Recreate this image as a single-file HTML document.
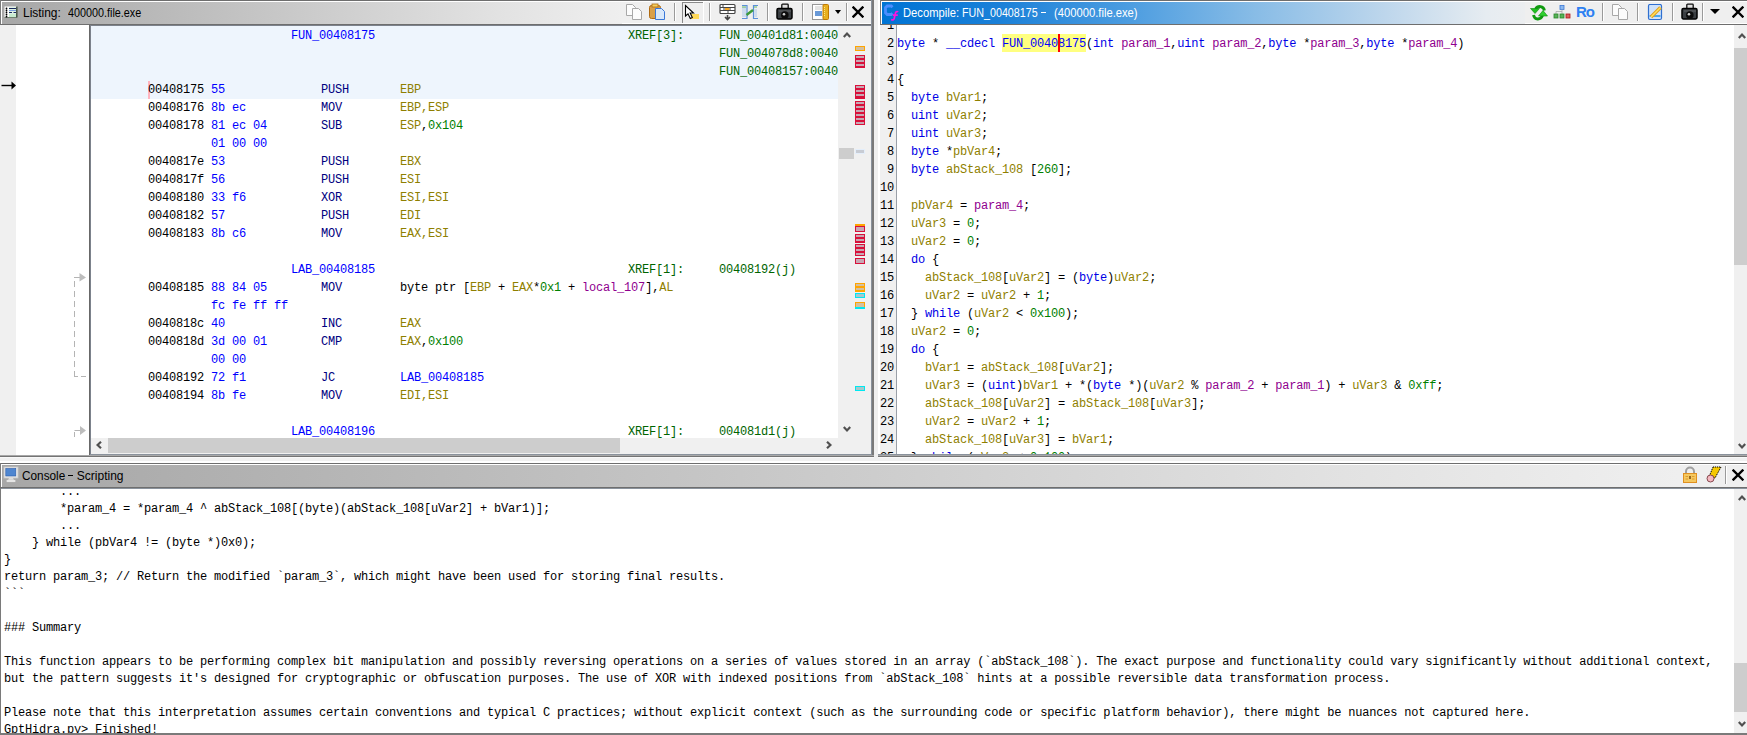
<!DOCTYPE html>
<html><head><meta charset="utf-8">
<style>
*{box-sizing:border-box}
html,body{margin:0;padding:0}
body{width:1747px;height:735px;overflow:hidden;position:relative;background:#f0f0f0;font-family:"Liberation Sans",sans-serif}
.a{position:absolute;display:block}
.m{font-family:"Liberation Mono",monospace;font-size:12px;letter-spacing:-0.2px;white-space:pre;line-height:18px;position:absolute;color:#000}
.ttl{font-family:"Liberation Sans",sans-serif;font-size:12px;white-space:pre;position:absolute;line-height:18px}
.k{color:#0000e6}.f{color:#0000ff}.v{color:#8f7f00}.p{color:#8f008f}.c{color:#008000}
.ad{color:#000}.by{color:#0000ff}.mn{color:#000080}.rg{color:#8f7f00}.lb{color:#0000ff}.xr{color:#006400}
</style></head>
<body>
<div class="a" style="left:0px;top:0px;width:874px;height:1px;background:#6e6e6e;"></div>
<div class="a" style="left:0px;top:0px;width:1px;height:25px;background:#7a7a7a;"></div>
<div class="a" style="left:1px;top:1px;width:870px;height:1px;background:#ffffff;"></div>
<div class="a" style="left:1px;top:1px;width:1px;height:23px;background:#ffffff;"></div>
<div class="a" style="left:2px;top:2px;width:620px;height:22px;background:linear-gradient(to right,#a7a7a7 0%,#c4c4c4 40%,#e2e2e2 80%,#efefef 100%);"></div>
<div class="a" style="left:622px;top:2px;width:249px;height:21px;background:#efefef;"></div>
<div class="a" style="left:622px;top:23px;width:249px;height:1px;background:#ffffff;"></div>
<div class="a" style="left:0px;top:24px;width:874px;height:1px;background:#6e6e6e;"></div>
<svg class="a" style="left:4px;top:6px" width="14" height="13" viewBox="0 0 14 13"><rect x="0.5" y="0.5" width="12.5" height="11" fill="#ffffff"/><rect x="5" y="1" width="7.5" height="10.5" fill="#dff2e4"/><path d="M5 2.5H12M5 6.5H8M9.5 6.5H12" stroke="#1a2a60" stroke-width="1.2"/><path d="M5 4.5H12" stroke="#7aa0e0" stroke-width="1"/><rect x="5" y="8" width="7.5" height="3.5" fill="#c8ecd0"/><path d="M12.8 0.5V11.5" stroke="#223322" stroke-width="1.2"/><path d="M0.5 11.5H13" stroke="#556655" stroke-width="0.8"/><circle cx="2.5" cy="2.5" r="0.9" fill="#000"/><circle cx="2.5" cy="4.5" r="0.9" fill="#000"/><circle cx="2.5" cy="6.4" r="0.9" fill="#000"/><circle cx="2.5" cy="8.4" r="0.9" fill="#000"/><circle cx="2.5" cy="10.5" r="0.9" fill="#000"/></svg>
<div class="ttl" style="left:22.6px;top:4px;color:#000;transform:scaleX(0.995);transform-origin:0 0">Listing:</div>
<div class="ttl" style="left:67.8px;top:4px;color:#000;transform:scaleX(0.9);transform-origin:0 0">400000.file.exe</div>
<svg class="a" style="left:626px;top:4px" width="17" height="17" viewBox="0 0 17 17"><path d="M0.5 0.5H6.5L9.5 3.5V11.5H0.5Z" fill="#fcfcfc" stroke="#a8a8a8"/><path d="M6.5 4.5H12.5L15.5 7.5V15.5H6.5Z" fill="#fcfcfc" stroke="#a8a8a8"/></svg>
<svg class="a" style="left:648px;top:3px" width="18" height="18" viewBox="0 0 18 18"><rect x="1.5" y="2.5" width="11" height="13" rx="2" fill="#d9a04a" stroke="#b06a10"/><rect x="4" y="1" width="6" height="3" fill="#f5d060" stroke="#b06a10" stroke-width="0.8"/><path d="M7.5 5.5H13.5L16.5 8.5V16.5H7.5Z" fill="#d8e8fb" stroke="#3a78d8"/></svg>
<div class="a" style="left:674px;top:3px;width:1px;height:18px;background:#9a9a9a;"></div><div class="a" style="left:675px;top:3px;width:1px;height:18px;background:#ffffff;"></div>
<div class="a" style="left:682px;top:2px;width:22px;height:1px;background:#8a8a8a;"></div>
<div class="a" style="left:682px;top:2px;width:1px;height:21px;background:#8a8a8a;"></div>
<div class="a" style="left:703px;top:2px;width:1px;height:22px;background:#ffffff;"></div>
<div class="a" style="left:682px;top:23px;width:22px;height:1px;background:#ffffff;"></div>
<svg class="a" style="left:684px;top:4px" width="17" height="17" viewBox="0 0 17 17"><rect x="6" y="10" width="9" height="5" fill="#ffd95a"/><path d="M1.5 1.5V12L4 9.8L6.3 14.5L8.3 13.6L6.2 9H9.5Z" fill="#fff" stroke="#000" stroke-width="1.1" stroke-linejoin="miter"/></svg>
<div class="a" style="left:709px;top:3px;width:1px;height:18px;background:#9a9a9a;"></div><div class="a" style="left:710px;top:3px;width:1px;height:18px;background:#ffffff;"></div>
<svg class="a" style="left:719px;top:3px" width="17" height="18" viewBox="0 0 17 18"><rect x="1" y="1.5" width="15" height="9" rx="1" fill="#fff" stroke="#444" stroke-width="1.2"/><path d="M1 4.5H16M1 7.5H16M4 1.5V4.5M11 4.5V7.5M9 7.5V10.5M5 4.5V7.5" stroke="#444" stroke-width="1"/><rect x="6" y="5" width="4.5" height="2" fill="#f5a623"/><path d="M8.5 12V16M6 14L8.5 16.5L11 14" stroke="#444" stroke-width="1.6" fill="none"/></svg>
<svg class="a" style="left:741px;top:4px" width="18" height="16" viewBox="0 0 18 16"><path d="M1 1.5H6V14.5H1" fill="none" stroke="#5b8fd8" stroke-width="1.2"/><path d="M17 1.5H12.5V14.5H17" fill="none" stroke="#5b8fd8" stroke-width="1.2"/><path d="M1 4H5M1 6H5M1 8H5M1 10H5M1 12H5" stroke="#9dbfea" stroke-width="0.8"/><path d="M13.5 6H16M13.5 8H16M13.5 10H16M13.5 12H16" stroke="#9dbfea" stroke-width="0.8"/><path d="M1 3H5M13 3H16" stroke="#66bb66" stroke-width="1"/><path d="M5.5 11L12 6" stroke="#3c9a3c" stroke-width="2.4"/></svg>
<div class="a" style="left:767px;top:3px;width:1px;height:18px;background:#9a9a9a;"></div><div class="a" style="left:768px;top:3px;width:1px;height:18px;background:#ffffff;"></div>
<svg class="a" style="left:776px;top:3px" width="17" height="18" viewBox="0 0 17 18"><rect x="5.8" y="1.2" width="6.4" height="5" rx="0.8" fill="#e0e0e0" stroke="#111" stroke-width="1.3"/><rect x="1" y="5.5" width="15" height="10.5" rx="1.4" fill="#3a3e42" stroke="#000" stroke-width="1.5"/><path d="M3 8H15" stroke="#777" stroke-width="0.7"/><circle cx="8.8" cy="12" r="3.8" fill="#0c0c0c"/><circle cx="8" cy="11.2" r="1.3" fill="#d0d0d0"/></svg>
<div class="a" style="left:802px;top:3px;width:1px;height:18px;background:#9a9a9a;"></div><div class="a" style="left:803px;top:3px;width:1px;height:18px;background:#ffffff;"></div>
<svg class="a" style="left:812px;top:4px" width="17" height="16" viewBox="0 0 17 16"><rect x="0.5" y="0.5" width="11" height="15" fill="#fff" stroke="#222" stroke-width="0.9" stroke-dasharray="1 1"/><path d="M3 3H10M3 5H10" stroke="#bbb" stroke-width="0.8"/><rect x="3" y="7" width="7" height="5" fill="#6a9ad8"/><rect x="11" y="0.5" width="5.5" height="15" rx="1" fill="#e8b020" stroke="#c07800"/><path d="M12.5 3V13" stroke="#fff3a0" stroke-width="0.8" stroke-dasharray="1 1"/></svg>
<svg class="a" style="left:835px;top:10px" width="6" height="4" viewBox="0 0 6 4"><path d="M0 0H6L3.0 4Z" fill="#000"/></svg>
<div class="a" style="left:846px;top:3px;width:1px;height:18px;background:#9a9a9a;"></div><div class="a" style="left:847px;top:3px;width:1px;height:18px;background:#ffffff;"></div>
<svg class="a" style="left:852px;top:6px" width="12" height="12" viewBox="0 0 12 12"><path d="M1.5 1.5L10.5 10.5M10.5 1.5L1.5 10.5" stroke="#000" stroke-width="2.4" stroke-linecap="square"/></svg>
<div class="a" style="left:0px;top:25px;width:16px;height:430px;background:#f0f0f0;"></div>
<div class="a" style="left:16px;top:25px;width:73px;height:430px;background:#ffffff;"></div>
<div class="a" style="left:89px;top:25px;width:1px;height:430px;background:#686868;"></div>
<div class="a" style="left:90px;top:25px;width:1px;height:430px;background:#7c828c;"></div>
<div class="a" style="left:90px;top:25px;width:781px;height:1px;background:#7c828c;"></div>
<div class="a" style="left:91px;top:25px;width:747px;height:413px;background:#fff;overflow:hidden">
<div class="a" style="left:0px;top:1px;width:747px;height:73px;background:#eef5fd;"></div>
<div class="a" style="left:57px;top:56px;width:2px;height:18px;background:#ffb4c0;"></div>
<div class="m" style="left:200px;top:2px"><span class="lb">FUN_00408175</span></div>
<div class="m" style="left:537px;top:2px"><span class="xr">XREF[3]:</span></div>
<div class="m" style="left:628px;top:2px"><span class="xr">FUN_00401d81:0040</span></div>
<div class="m" style="left:628px;top:20px"><span class="xr">FUN_004078d8:0040</span></div>
<div class="m" style="left:628px;top:38px"><span class="xr">FUN_00408157:0040</span></div>
<div class="m" style="left:57px;top:56px"><span class="ad">00408175</span></div>
<div class="m" style="left:120px;top:56px"><span class="by">55</span></div>
<div class="m" style="left:230px;top:56px"><span class="mn">PUSH</span></div>
<div class="m" style="left:309px;top:56px"><span class="rg">EBP</span></div>
<div class="m" style="left:57px;top:74px"><span class="ad">00408176</span></div>
<div class="m" style="left:120px;top:74px"><span class="by">8b ec</span></div>
<div class="m" style="left:230px;top:74px"><span class="mn">MOV</span></div>
<div class="m" style="left:309px;top:74px"><span class="rg">EBP,ESP</span></div>
<div class="m" style="left:57px;top:92px"><span class="ad">00408178</span></div>
<div class="m" style="left:120px;top:92px"><span class="by">81 ec 04</span></div>
<div class="m" style="left:230px;top:92px"><span class="mn">SUB</span></div>
<div class="m" style="left:309px;top:92px"><span class="rg">ESP</span>,<span class="c">0x104</span></div>
<div class="m" style="left:120px;top:110px"><span class="by">01 00 00</span></div>
<div class="m" style="left:57px;top:128px"><span class="ad">0040817e</span></div>
<div class="m" style="left:120px;top:128px"><span class="by">53</span></div>
<div class="m" style="left:230px;top:128px"><span class="mn">PUSH</span></div>
<div class="m" style="left:309px;top:128px"><span class="rg">EBX</span></div>
<div class="m" style="left:57px;top:146px"><span class="ad">0040817f</span></div>
<div class="m" style="left:120px;top:146px"><span class="by">56</span></div>
<div class="m" style="left:230px;top:146px"><span class="mn">PUSH</span></div>
<div class="m" style="left:309px;top:146px"><span class="rg">ESI</span></div>
<div class="m" style="left:57px;top:164px"><span class="ad">00408180</span></div>
<div class="m" style="left:120px;top:164px"><span class="by">33 f6</span></div>
<div class="m" style="left:230px;top:164px"><span class="mn">XOR</span></div>
<div class="m" style="left:309px;top:164px"><span class="rg">ESI,ESI</span></div>
<div class="m" style="left:57px;top:182px"><span class="ad">00408182</span></div>
<div class="m" style="left:120px;top:182px"><span class="by">57</span></div>
<div class="m" style="left:230px;top:182px"><span class="mn">PUSH</span></div>
<div class="m" style="left:309px;top:182px"><span class="rg">EDI</span></div>
<div class="m" style="left:57px;top:200px"><span class="ad">00408183</span></div>
<div class="m" style="left:120px;top:200px"><span class="by">8b c6</span></div>
<div class="m" style="left:230px;top:200px"><span class="mn">MOV</span></div>
<div class="m" style="left:309px;top:200px"><span class="rg">EAX,ESI</span></div>
<div class="m" style="left:200px;top:236px"><span class="lb">LAB_00408185</span></div>
<div class="m" style="left:537px;top:236px"><span class="xr">XREF[1]:</span></div>
<div class="m" style="left:628px;top:236px"><span class="xr">00408192(j)</span></div>
<div class="m" style="left:57px;top:254px"><span class="ad">00408185</span></div>
<div class="m" style="left:120px;top:254px"><span class="by">88 84 05</span></div>
<div class="m" style="left:230px;top:254px"><span class="mn">MOV</span></div>
<div class="m" style="left:309px;top:254px">byte ptr [<span class="rg">EBP</span> + <span class="rg">EAX</span>*<span class="c">0x1</span> + <span class="p">local_107</span>],<span class="rg">AL</span></div>
<div class="m" style="left:120px;top:272px"><span class="by">fc fe ff ff</span></div>
<div class="m" style="left:57px;top:290px"><span class="ad">0040818c</span></div>
<div class="m" style="left:120px;top:290px"><span class="by">40</span></div>
<div class="m" style="left:230px;top:290px"><span class="mn">INC</span></div>
<div class="m" style="left:309px;top:290px"><span class="rg">EAX</span></div>
<div class="m" style="left:57px;top:308px"><span class="ad">0040818d</span></div>
<div class="m" style="left:120px;top:308px"><span class="by">3d 00 01</span></div>
<div class="m" style="left:230px;top:308px"><span class="mn">CMP</span></div>
<div class="m" style="left:309px;top:308px"><span class="rg">EAX</span>,<span class="c">0x100</span></div>
<div class="m" style="left:120px;top:326px"><span class="by">00 00</span></div>
<div class="m" style="left:57px;top:344px"><span class="ad">00408192</span></div>
<div class="m" style="left:120px;top:344px"><span class="by">72 f1</span></div>
<div class="m" style="left:230px;top:344px"><span class="mn">JC</span></div>
<div class="m" style="left:309px;top:344px"><span class="lb">LAB_00408185</span></div>
<div class="m" style="left:57px;top:362px"><span class="ad">00408194</span></div>
<div class="m" style="left:120px;top:362px"><span class="by">8b fe</span></div>
<div class="m" style="left:230px;top:362px"><span class="mn">MOV</span></div>
<div class="m" style="left:309px;top:362px"><span class="rg">EDI,ESI</span></div>
<div class="m" style="left:200px;top:398px"><span class="lb">LAB_00408196</span></div>
<div class="m" style="left:537px;top:398px"><span class="xr">XREF[1]:</span></div>
<div class="m" style="left:628px;top:398px"><span class="xr">004081d1(j)</span></div>
</div>
<div class="a" style="left:90px;top:25px;width:781px;height:1px;background:#7c828c;"></div>
<div class="a" style="left:838px;top:26px;width:33px;height:429px;background:#f0f0f0;"></div>
<svg class="a" style="left:843px;top:31px" width="8" height="7" viewBox="0 0 8 7"><path d="M0.8 6L4 2.6L7.2 6" stroke="#505050" stroke-width="2.2" fill="none"/></svg>
<svg class="a" style="left:843px;top:426px" width="8" height="7" viewBox="0 0 8 7"><path d="M0.8 1L4 4.4L7.2 1" stroke="#505050" stroke-width="2.2" fill="none"/></svg>
<div class="a" style="left:839px;top:148px;width:15px;height:11px;background:#cdcdcd;"></div>
<div class="a" style="left:855px;top:149px;width:10px;height:5px;background:#c8ccd4;box-shadow:0 0 0 1px #e4eefa inset"></div>
<div class="a" style="left:855px;top:46px;width:10px;height:5px;background:#d4c0a0;border:1px solid #ffa500"></div>
<div class="a" style="left:855px;top:55px;width:10px;height:13px;background:repeating-linear-gradient(to bottom,#c8a8b4 0,#c8a8b4 2px,#d8103a 2px,#d8103a 4px);border:1px solid #d8103a"></div>
<div class="a" style="left:855px;top:85px;width:10px;height:14px;background:repeating-linear-gradient(to bottom,#c8a8b4 0,#c8a8b4 2px,#d8103a 2px,#d8103a 4px);border:1px solid #d8103a"></div>
<div class="a" style="left:855px;top:101px;width:10px;height:24px;background:repeating-linear-gradient(to bottom,#c8a8b4 0,#c8a8b4 2px,#d8103a 2px,#d8103a 4px);border:1px solid #d8103a"></div>
<div class="a" style="left:855px;top:224px;width:10px;height:2px;background:#ffa500;"></div>
<div class="a" style="left:855px;top:226px;width:10px;height:6px;background:#c8a8b4;border:1px solid #d8103a"></div>
<div class="a" style="left:855px;top:234px;width:10px;height:9px;background:repeating-linear-gradient(to bottom,#c8a8b4 0,#c8a8b4 2px,#d8103a 2px,#d8103a 4px);border:1px solid #d8103a"></div>
<div class="a" style="left:855px;top:244px;width:10px;height:12px;background:repeating-linear-gradient(to bottom,#c8a8b4 0,#c8a8b4 2px,#d8103a 2px,#d8103a 4px);border:1px solid #d8103a"></div>
<div class="a" style="left:855px;top:258px;width:10px;height:6px;background:#c8a8b4;border:1px solid #d8103a"></div>
<div class="a" style="left:855px;top:283px;width:10px;height:9px;background:repeating-linear-gradient(to bottom,#d4c0a0 0,#d4c0a0 2px,#ffa500 2px,#ffa500 4px);border:1px solid #ffa500"></div>
<div class="a" style="left:855px;top:293px;width:10px;height:5px;background:#a8c8cc;border:1px solid #00e8f0"></div>
<div class="a" style="left:855px;top:302px;width:10px;height:6px;background:#d4c0a0;border:1px solid #ffa500"></div>
<div class="a" style="left:855px;top:307px;width:10px;height:2px;background:#00e8f0;"></div>
<div class="a" style="left:855px;top:386px;width:10px;height:5px;background:#a8c8cc;border:1px solid #00e8f0"></div>
<div class="a" style="left:871px;top:0px;width:1px;height:456px;background:#8a929c;"></div>
<div class="a" style="left:872px;top:0px;width:2px;height:456px;background:#7a7a7a;"></div>
<div class="a" style="left:91px;top:438px;width:747px;height:16px;background:#f0f0f0;"></div>
<div class="a" style="left:108px;top:438px;width:512px;height:15px;background:#cdcdcd;"></div>
<svg class="a" style="left:95px;top:441px" width="7" height="8" viewBox="0 0 7 8"><path d="M6 0.8L2.6 4L6 7.2" stroke="#505050" stroke-width="2.2" fill="none"/></svg>
<svg class="a" style="left:826px;top:441px" width="7" height="8" viewBox="0 0 7 8"><path d="M1 0.8L4.4 4L1 7.2" stroke="#505050" stroke-width="2.2" fill="none"/></svg>
<div class="a" style="left:90px;top:454px;width:781px;height:1px;background:#8a929c;"></div>
<div class="a" style="left:0px;top:455px;width:874px;height:1px;background:#a8a8a8;"></div>
<div class="a" style="left:0px;top:456px;width:874px;height:1px;background:#747474;"></div>
<div class="a" style="left:0px;top:457px;width:874px;height:1px;background:#f8f8f8;"></div>
<svg class="a" style="left:0px;top:80px" width="17" height="11" viewBox="0 0 17 11"><path d="M1.5 5.5H13" stroke="#000" stroke-width="1.4"/><path d="M11.5 1.5L16 5.5L11.5 9.5Z" fill="#000"/></svg>
<svg class="a" style="left:70px;top:268px" width="18" height="114" viewBox="0 0 18 114"><path d="M4.5 13V109" stroke="#b4b4b4" stroke-width="1" fill="none" stroke-dasharray="6 4"/><path d="M4 108.5H8M11 108.5H16" stroke="#b4b4b4" stroke-width="1"/><path d="M4 9.5H10" stroke="#b4b4b4" stroke-width="1"/><path d="M9.5 5L16 9.5L9.5 13.5Z" fill="#bdbdbd"/></svg>
<svg class="a" style="left:70px;top:422px" width="18" height="18" viewBox="0 0 18 18"><path d="M4.5 8.5H11" stroke="#b4b4b4" stroke-width="1"/><path d="M4.5 10V15" stroke="#b4b4b4" stroke-width="1"/><path d="M10 4L16 8.5L10 13Z" fill="#bdbdbd"/></svg>
<div class="a" style="left:880px;top:0px;width:867px;height:1px;background:#6e6e6e;"></div>
<div class="a" style="left:880px;top:0px;width:1px;height:25px;background:#7a7a7a;"></div>
<div class="a" style="left:878px;top:0px;width:2px;height:455px;background:#ffffff;"></div>
<div class="a" style="left:881px;top:1px;width:866px;height:1px;background:#ffffff;"></div>
<div class="a" style="left:881px;top:1px;width:1px;height:23px;background:#ffffff;"></div>
<div class="a" style="left:882px;top:2px;width:643px;height:22px;background:linear-gradient(to right,#0074d4 0%,#1a80d8 18%,#4b9ce0 38%,#88bce6 58%,#bdd6ec 78%,#e6ecf1 94%,#eceef0 100%);"></div>
<div class="a" style="left:1525px;top:2px;width:222px;height:21px;background:#efefef;"></div>
<div class="a" style="left:1525px;top:23px;width:222px;height:1px;background:#ffffff;"></div>
<div class="a" style="left:880px;top:24px;width:867px;height:1px;background:#6e6e6e;"></div>
<svg class="a" style="left:882px;top:3px" width="18" height="18" viewBox="0 0 18 18"><path d="M10.5 4.2L9.3 3H5.2L3.5 4.7V9.8L5.2 11.5H9.3L10.5 10.3" stroke="#4a8eff" stroke-width="2.8" fill="none"/><path d="M16 9.2C15.5 8.3 14.2 8.3 13.6 9.5L12.2 15.5C11.8 17 10.5 17.5 9.2 16.3M10.8 12.2H15.8" stroke="#ff10e0" stroke-width="1.7" fill="none"/></svg>
<div class="ttl" style="left:902.8px;top:4px;color:#fff;transform:scaleX(0.933);transform-origin:0 0">Decompile:</div>
<div class="ttl" style="left:962px;top:4px;color:#fff;transform:scaleX(0.893);transform-origin:0 0">FUN_00408175</div>
<div class="a" style="left:1041px;top:12px;width:5px;height:1px;background:#fff;"></div>
<div class="ttl" style="left:1053.7px;top:4px;color:#fff;transform:scaleX(0.935);transform-origin:0 0">(400000.file.exe)</div>
<svg class="a" style="left:1530px;top:3px" width="18" height="18" viewBox="0 0 18 18"><path d="M14.5 7.5C13.5 3 8 2 5.5 6" stroke="#109a10" stroke-width="2.8" fill="none"/><path d="M0.5 5.5H9.5L5 10.5Z" fill="#20c020" stroke="#0a8a0a" stroke-width="0.6"/><path d="M3.5 12C4.5 17 10.5 17.5 12.5 12.5" stroke="#109a10" stroke-width="2.8" fill="none"/><path d="M8.5 13H17.5L13 7.5Z" fill="#30d030" stroke="#0a8a0a" stroke-width="0.6"/></svg>
<svg class="a" style="left:1553px;top:5px" width="18" height="14" viewBox="0 0 18 14"><rect x="7" y="0.5" width="4" height="4" fill="#8ab8f0" stroke="#3a78d8" stroke-width="0.8"/><path d="M9 4.5V9M3 9V6.5H9" stroke="#aaa" stroke-width="0.8" fill="none"/><rect x="1" y="9" width="4" height="4" fill="#58b058" stroke="#2a8a2a" stroke-width="0.8"/><rect x="7" y="9" width="4" height="4" fill="#58b058" stroke="#2a8a2a" stroke-width="0.8"/><rect x="13" y="9" width="4" height="4" fill="#d86060" stroke="#b01818" stroke-width="0.8"/></svg>
<div class="a" style="left:1576px;top:3px;font-family:'Liberation Sans',sans-serif;font-size:15px;font-weight:bold;letter-spacing:-1px;color:#2d80f2;line-height:18px">Ro</div>
<div class="a" style="left:1602px;top:3px;width:1px;height:18px;background:#9a9a9a;"></div><div class="a" style="left:1603px;top:3px;width:1px;height:18px;background:#ffffff;"></div>
<svg class="a" style="left:1612px;top:4px" width="17" height="17" viewBox="0 0 17 17"><path d="M0.5 0.5H6.5L9.5 3.5V11.5H0.5Z" fill="#fcfcfc" stroke="#a8a8a8"/><path d="M6.5 4.5H12.5L15.5 7.5V15.5H6.5Z" fill="#fcfcfc" stroke="#a8a8a8"/></svg>
<div class="a" style="left:1637px;top:3px;width:1px;height:18px;background:#9a9a9a;"></div><div class="a" style="left:1638px;top:3px;width:1px;height:18px;background:#ffffff;"></div>
<svg class="a" style="left:1647px;top:4px" width="18" height="17" viewBox="0 0 18 17"><rect x="1.5" y="0.5" width="13" height="15" rx="1.5" fill="#cfe2fa" stroke="#2f6fd0" stroke-width="1.2"/><rect x="2.5" y="11" width="11" height="2" fill="#4aa8f0"/><path d="M4 13L13.5 3.5" stroke="#e0a020" stroke-width="3.6"/><path d="M4 13L13.5 3.5" stroke="#ffe060" stroke-width="1.4"/></svg>
<div class="a" style="left:1672px;top:3px;width:1px;height:18px;background:#9a9a9a;"></div><div class="a" style="left:1673px;top:3px;width:1px;height:18px;background:#ffffff;"></div>
<svg class="a" style="left:1681px;top:3px" width="17" height="18" viewBox="0 0 17 18"><rect x="5.8" y="1.2" width="6.4" height="5" rx="0.8" fill="#e0e0e0" stroke="#111" stroke-width="1.3"/><rect x="1" y="5.5" width="15" height="10.5" rx="1.4" fill="#3a3e42" stroke="#000" stroke-width="1.5"/><path d="M3 8H15" stroke="#777" stroke-width="0.7"/><circle cx="8.8" cy="12" r="3.8" fill="#0c0c0c"/><circle cx="8" cy="11.2" r="1.3" fill="#d0d0d0"/></svg>
<div class="a" style="left:1702px;top:3px;width:1px;height:18px;background:#9a9a9a;"></div><div class="a" style="left:1703px;top:3px;width:1px;height:18px;background:#ffffff;"></div>
<svg class="a" style="left:1710px;top:9px" width="10" height="5" viewBox="0 0 10 5"><path d="M0 0H10L5.0 5Z" fill="#000"/></svg>
<svg class="a" style="left:1732px;top:6px" width="12" height="12" viewBox="0 0 12 12"><path d="M1.5 1.5L10.5 10.5M10.5 1.5L1.5 10.5" stroke="#000" stroke-width="2.4" stroke-linecap="square"/></svg>
<div class="a" style="left:880px;top:25px;width:16px;height:430px;background:#f0f0f0;"></div>
<div class="a" style="left:896px;top:25px;width:1px;height:430px;background:#9aa0a8;"></div>
<div class="a" style="left:880px;top:25px;width:16px;height:429px;overflow:hidden"><div class="a" style="left:-880px;top:-25px;width:1747px;height:735px">
<div class="m" style="right:853px;top:17px">1</div>
<div class="m" style="right:853px;top:35px">2</div>
<div class="m" style="right:853px;top:53px">3</div>
<div class="m" style="right:853px;top:71px">4</div>
<div class="m" style="right:853px;top:89px">5</div>
<div class="m" style="right:853px;top:107px">6</div>
<div class="m" style="right:853px;top:125px">7</div>
<div class="m" style="right:853px;top:143px">8</div>
<div class="m" style="right:853px;top:161px">9</div>
<div class="m" style="right:853px;top:179px">10</div>
<div class="m" style="right:853px;top:197px">11</div>
<div class="m" style="right:853px;top:215px">12</div>
<div class="m" style="right:853px;top:233px">13</div>
<div class="m" style="right:853px;top:251px">14</div>
<div class="m" style="right:853px;top:269px">15</div>
<div class="m" style="right:853px;top:287px">16</div>
<div class="m" style="right:853px;top:305px">17</div>
<div class="m" style="right:853px;top:323px">18</div>
<div class="m" style="right:853px;top:341px">19</div>
<div class="m" style="right:853px;top:359px">20</div>
<div class="m" style="right:853px;top:377px">21</div>
<div class="m" style="right:853px;top:395px">22</div>
<div class="m" style="right:853px;top:413px">23</div>
<div class="m" style="right:853px;top:431px">24</div>
<div class="m" style="right:853px;top:449px">25</div>
</div></div>
<div class="a" style="left:897px;top:25px;width:837px;height:429px;background:#fff;overflow:hidden"><div class="a" style="left:-897px;top:-25px;width:1747px;height:735px">
<div class="a" style="left:1002px;top:34px;width:84px;height:18px;background:#ffff80;"></div>
<div class="m" style="left:897px;top:35px"><span class="k">byte</span> * <span class="k">__cdecl</span> <span class="f">FUN_00408175</span>(<span class="k">int</span> <span class="p">param_1</span>,<span class="k">uint</span> <span class="p">param_2</span>,<span class="k">byte</span> *<span class="p">param_3</span>,<span class="k">byte</span> *<span class="p">param_4</span>)</div>
<div class="m" style="left:897px;top:71px">{</div>
<div class="m" style="left:897px;top:89px">  <span class="k">byte</span> <span class="v">bVar1</span>;</div>
<div class="m" style="left:897px;top:107px">  <span class="k">uint</span> <span class="v">uVar2</span>;</div>
<div class="m" style="left:897px;top:125px">  <span class="k">uint</span> <span class="v">uVar3</span>;</div>
<div class="m" style="left:897px;top:143px">  <span class="k">byte</span> *<span class="v">pbVar4</span>;</div>
<div class="m" style="left:897px;top:161px">  <span class="k">byte</span> <span class="v">abStack_108</span> [<span class="c">260</span>];</div>
<div class="m" style="left:897px;top:197px">  <span class="v">pbVar4</span> = <span class="p">param_4</span>;</div>
<div class="m" style="left:897px;top:215px">  <span class="v">uVar3</span> = <span class="c">0</span>;</div>
<div class="m" style="left:897px;top:233px">  <span class="v">uVar2</span> = <span class="c">0</span>;</div>
<div class="m" style="left:897px;top:251px">  <span class="k">do</span> {</div>
<div class="m" style="left:897px;top:269px">    <span class="v">abStack_108</span>[<span class="v">uVar2</span>] = (<span class="k">byte</span>)<span class="v">uVar2</span>;</div>
<div class="m" style="left:897px;top:287px">    <span class="v">uVar2</span> = <span class="v">uVar2</span> + <span class="c">1</span>;</div>
<div class="m" style="left:897px;top:305px">  } <span class="k">while</span> (<span class="v">uVar2</span> &lt; <span class="c">0x100</span>);</div>
<div class="m" style="left:897px;top:323px">  <span class="v">uVar2</span> = <span class="c">0</span>;</div>
<div class="m" style="left:897px;top:341px">  <span class="k">do</span> {</div>
<div class="m" style="left:897px;top:359px">    <span class="v">bVar1</span> = <span class="v">abStack_108</span>[<span class="v">uVar2</span>];</div>
<div class="m" style="left:897px;top:377px">    <span class="v">uVar3</span> = (<span class="k">uint</span>)<span class="v">bVar1</span> + *(<span class="k">byte</span> *)(<span class="v">uVar2</span> % <span class="p">param_2</span> + <span class="p">param_1</span>) + <span class="v">uVar3</span> &amp; <span class="c">0xff</span>;</div>
<div class="m" style="left:897px;top:395px">    <span class="v">abStack_108</span>[<span class="v">uVar2</span>] = <span class="v">abStack_108</span>[<span class="v">uVar3</span>];</div>
<div class="m" style="left:897px;top:413px">    <span class="v">uVar2</span> = <span class="v">uVar2</span> + <span class="c">1</span>;</div>
<div class="m" style="left:897px;top:431px">    <span class="v">abStack_108</span>[<span class="v">uVar3</span>] = <span class="v">bVar1</span>;</div>
<div class="m" style="left:897px;top:449px">  } <span class="k">while</span> (<span class="v">uVar2</span> &lt; <span class="c">0x100</span>);</div>
<div class="a" style="left:1058px;top:34px;width:2px;height:18px;background:#ff0000;"></div>
</div></div>
<div class="a" style="left:1734px;top:25px;width:13px;height:430px;background:#f0f0f0;"></div>
<div class="a" style="left:1734px;top:48px;width:13px;height:217px;background:#cdcdcd;"></div>
<svg class="a" style="left:1738px;top:32px" width="8" height="7" viewBox="0 0 8 7"><path d="M0.8 6L4 2.6L7.2 6" stroke="#505050" stroke-width="2.2" fill="none"/></svg>
<svg class="a" style="left:1738px;top:443px" width="8" height="7" viewBox="0 0 8 7"><path d="M0.8 1L4 4.4L7.2 1" stroke="#505050" stroke-width="2.2" fill="none"/></svg>
<div class="a" style="left:878px;top:454px;width:869px;height:1px;background:#8a929c;"></div>
<div class="a" style="left:878px;top:455px;width:869px;height:1px;background:#a8a8a8;"></div>
<div class="a" style="left:878px;top:456px;width:869px;height:1px;background:#747474;"></div>
<div class="a" style="left:878px;top:457px;width:869px;height:1px;background:#f8f8f8;"></div>
<div class="a" style="left:0px;top:461px;width:1747px;height:2px;background:#ffffff;"></div>
<div class="a" style="left:0px;top:463px;width:1747px;height:1px;background:#6e6e6e;"></div>
<div class="a" style="left:0px;top:463px;width:1px;height:272px;background:#7a7a7a;"></div>
<div class="a" style="left:1px;top:464px;width:1746px;height:1px;background:#ffffff;"></div>
<div class="a" style="left:1px;top:464px;width:1px;height:24px;background:#ffffff;"></div>
<div class="a" style="left:2px;top:465px;width:1677px;height:22px;background:linear-gradient(to right,#a7a7a7 0%,#c4c4c4 40%,#e2e2e2 80%,#efefef 100%);"></div>
<div class="a" style="left:1679px;top:465px;width:68px;height:22px;background:#efefef;"></div>
<div class="a" style="left:0px;top:487px;width:1747px;height:1px;background:#6e6e6e;"></div>
<div class="a" style="left:1px;top:488px;width:1746px;height:1px;background:#8a929c;"></div>
<svg class="a" style="left:3px;top:466px" width="16" height="17" viewBox="0 0 16 17"><rect x="1" y="1" width="14" height="11" fill="#e8e8e8" stroke="#c8c8c8" stroke-width="0.8"/><rect x="2.8" y="2.5" width="10" height="7.5" fill="#4f86d0" stroke="#2a5aa8" stroke-width="0.6"/><path d="M6 12H10L11 14H5Z" fill="#ddd"/><rect x="3.5" y="14" width="9" height="2" rx="0.8" fill="#f4f4f4" stroke="#bbb" stroke-width="0.5"/></svg>
<div class="ttl" style="left:21.7px;top:467px;color:#000;transform:scaleX(0.983);transform-origin:0 0">Console</div>
<div class="a" style="left:68px;top:475px;width:5px;height:1px;background:#000;"></div>
<div class="ttl" style="left:76.8px;top:467px;color:#000;transform:scaleX(1.0);transform-origin:0 0">Scripting</div>
<svg class="a" style="left:1682px;top:466px" width="16" height="18" viewBox="0 0 16 18"><path d="M4 8V5.5A4 4 0 0 1 12 5.5V8" stroke="#a0a0a0" stroke-width="2" fill="none"/><rect x="1.5" y="7.5" width="13" height="9" fill="#f5c860" stroke="#e09020"/><path d="M3.5 10.5H6M10 10.5H12.5M3.5 13H6M10 13H12.5" stroke="#d89020" stroke-width="0.8"/><rect x="7.2" y="10" width="1.6" height="3" fill="#805010"/></svg>
<svg class="a" style="left:1705px;top:466px" width="17" height="18" viewBox="0 0 17 18"><path d="M8 1H16L10 12L4 11Z" fill="#f5c800" stroke="#000" stroke-width="1" stroke-dasharray="1.2 0.8"/><circle cx="5.5" cy="12.5" r="3.5" fill="#f4b8c0" stroke="#7a3a40" stroke-width="0.9"/></svg>
<div class="a" style="left:1725px;top:466px;width:1px;height:18px;background:#9a9a9a;"></div><div class="a" style="left:1726px;top:466px;width:1px;height:18px;background:#ffffff;"></div>
<svg class="a" style="left:1732px;top:469px" width="12" height="12" viewBox="0 0 12 12"><path d="M1.5 1.5L10.5 10.5M10.5 1.5L1.5 10.5" stroke="#000" stroke-width="2.4" stroke-linecap="square"/></svg>
<div class="a" style="left:1px;top:489px;width:1733px;height:244px;background:#ffffff;"></div>
<div class="a" style="left:1px;top:489px;width:1733px;height:244px;overflow:hidden"><div class="a" style="left:-1px;top:-489px;width:1747px;height:735px">
<div class="m" style="left:4px;top:483px">        ...</div>
<div class="m" style="left:4px;top:500px">        *param_4 = *param_4 ^ abStack_108[(byte)(abStack_108[uVar2] + bVar1)];</div>
<div class="m" style="left:4px;top:517px">        ...</div>
<div class="m" style="left:4px;top:534px">    } while (pbVar4 != (byte *)0x0);</div>
<div class="m" style="left:4px;top:551px">}</div>
<div class="m" style="left:4px;top:568px">return param_3; // Return the modified `param_3`, which might have been used for storing final results.</div>
<div class="m" style="left:4px;top:585px">```</div>
<div class="m" style="left:4px;top:619px">### Summary</div>
<div class="m" style="left:4px;top:653px">This function appears to be performing complex bit manipulation and possibly reversing operations on a series of values stored in an array (`abStack_108`). The exact purpose and functionality could vary significantly without additional context,</div>
<div class="m" style="left:4px;top:670px">but the pattern suggests it&#x27;s designed for cryptographic or obfuscation purposes. The use of XOR with indexed positions from `abStack_108` hints at a possible reversible data transformation process.</div>
<div class="m" style="left:4px;top:704px">Please note that this interpretation assumes certain conventions and typical C practices; without explicit context (such as the surrounding code or specific platform behavior), there might be nuances not captured here.</div>
<div class="m" style="left:4px;top:721px">GptHidra.py&gt; Finished!</div>
</div></div>
<div class="a" style="left:1734px;top:489px;width:13px;height:244px;background:#f0f0f0;"></div>
<div class="a" style="left:1734px;top:663px;width:13px;height:49px;background:#cdcdcd;"></div>
<svg class="a" style="left:1738px;top:494px" width="8" height="7" viewBox="0 0 8 7"><path d="M0.8 6L4 2.6L7.2 6" stroke="#505050" stroke-width="2.2" fill="none"/></svg>
<svg class="a" style="left:1738px;top:721px" width="8" height="7" viewBox="0 0 8 7"><path d="M0.8 1L4 4.4L7.2 1" stroke="#505050" stroke-width="2.2" fill="none"/></svg>
<div class="a" style="left:0px;top:733px;width:1747px;height:2px;background:#7a7a7a;"></div>
</body></html>
